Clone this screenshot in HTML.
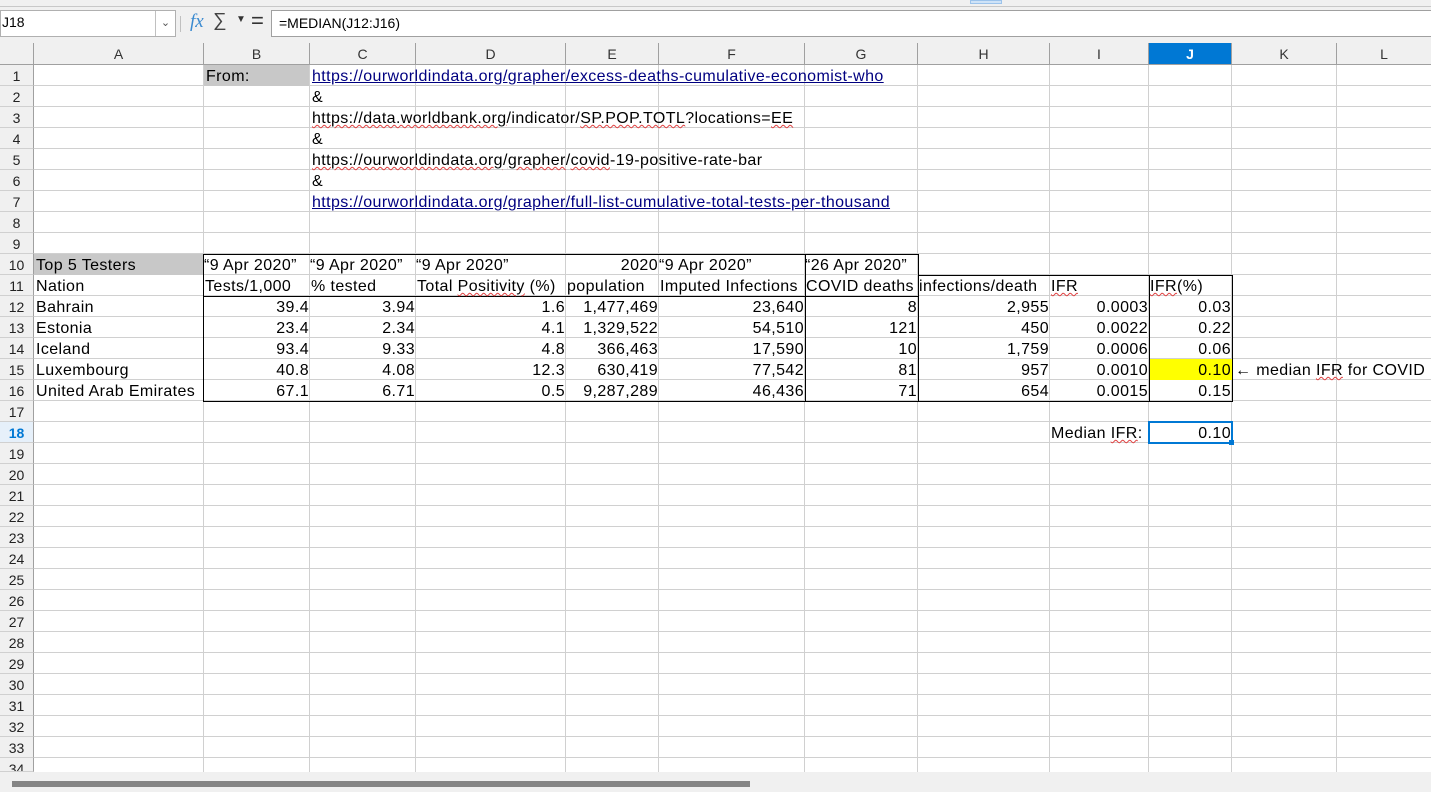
<!DOCTYPE html>
<html><head><meta charset="utf-8"><style>
*{margin:0;padding:0;box-sizing:border-box}
body{width:1431px;height:792px;overflow:hidden;background:#fff;position:relative;font-family:"Liberation Sans",sans-serif;font-size:15px;color:#000}
.a{position:absolute}
.c{position:absolute;height:21px;line-height:23px;white-space:nowrap;padding:0 2px;overflow:visible;font-size:16px;letter-spacing:0.4px}
.r{text-align:right;letter-spacing:0.4px;padding-right:1px}
.v{position:absolute;top:65px;height:707px;width:1px;background:#d0d0d0}
.hd{position:absolute;top:43px;height:22px;line-height:22px;text-align:center;font-size:14px;color:#333;background:#f0f0f0;border-right:1px solid #a0a0a0;border-bottom:1px solid #a0a0a0}
.rn{position:absolute;left:0;width:34px;height:21px;line-height:22px;text-align:center;font-size:14px;color:#222;background:#f0f0f0;border-right:1px solid #a0a0a0;border-bottom:1px solid #d0d0d0}
.lk{color:#000080;text-decoration:underline}
.sq{text-decoration:underline wavy #e04040;text-decoration-thickness:1px}
.bx{position:absolute;border:1px solid #000}
</style></head><body>
<div class="a" style="left:0;top:0;width:1431px;height:43px;background:#f0f0f0"></div>
<div class="a" style="left:0;top:6px;width:1431px;height:1px;background:#c8c8c8"></div>
<div class="a" style="left:970px;top:0;width:32px;height:4px;background:#cfe3f7;border:1px solid #9cc3eb"></div>
<div class="a" style="left:0;top:10px;width:176px;height:27px;background:#fff;border:1px solid #b0b0b0"></div>
<div class="a" style="left:2px;top:14px;font-size:14px">J18</div>
<div class="a" style="left:155px;top:11px;width:20px;height:25px;border-left:1px solid #c0c0c0;background:#fff;font-size:11px;text-align:center;line-height:24px;color:#555">&#8964;</div>
<div class="a" style="left:180px;top:16px;width:1px;height:16px;background:#c0c0c0"></div>
<div class="a" style="left:190px;top:11px;font-family:'Liberation Serif',serif;font-style:italic;font-size:19px;color:#3a8ad0">fx</div>
<div class="a" style="left:213px;top:10px;font-size:19px;color:#444">&#8721;</div>
<div class="a" style="left:236px;top:14px;font-size:10px;color:#333">&#9660;</div>
<div class="a" style="left:251px;top:8px;font-size:22px;color:#333">=</div>
<div class="a" style="left:271px;top:10px;width:1160px;height:27px;background:#fff;border:1px solid #a0a0a0;border-right:none;font-size:14px;line-height:25px;padding-left:7px">=MEDIAN(J12:J16)</div>

<div class="hd" style="left:0;width:34px"></div>
<div class="hd" style="left:34px;width:170px">A</div>
<div class="hd" style="left:204px;width:106px">B</div>
<div class="hd" style="left:310px;width:106px">C</div>
<div class="hd" style="left:416px;width:150px">D</div>
<div class="hd" style="left:566px;width:93px">E</div>
<div class="hd" style="left:659px;width:146px">F</div>
<div class="hd" style="left:805px;width:113px">G</div>
<div class="hd" style="left:918px;width:132px">H</div>
<div class="hd" style="left:1050px;width:99px">I</div>
<div class="hd" style="left:1149px;width:83px;background:#0078d4;color:#fff;font-weight:bold">J</div>
<div class="hd" style="left:1232px;width:105px">K</div>
<div class="hd" style="left:1337px;width:94px;border-right:none">L</div>

<div class="a" style="left:34px;top:65px;width:1397px;height:707px;background:repeating-linear-gradient(to bottom,transparent 0,transparent 20px,#d0d0d0 20px,#d0d0d0 21px)"></div>
<div class="v" style="left:203px"></div><div class="v" style="left:309px"></div>
<div class="v" style="left:415px"></div><div class="v" style="left:565px"></div>
<div class="v" style="left:658px"></div><div class="v" style="left:804px"></div>
<div class="v" style="left:917px"></div><div class="v" style="left:1049px"></div>
<div class="v" style="left:1148px"></div><div class="v" style="left:1231px"></div>
<div class="v" style="left:1336px"></div>

<div class="rn" style="top:65px">1</div><div class="rn" style="top:86px">2</div><div class="rn" style="top:107px">3</div><div class="rn" style="top:128px">4</div><div class="rn" style="top:149px">5</div><div class="rn" style="top:170px">6</div><div class="rn" style="top:191px">7</div><div class="rn" style="top:212px">8</div><div class="rn" style="top:233px">9</div><div class="rn" style="top:254px">10</div><div class="rn" style="top:275px">11</div><div class="rn" style="top:296px">12</div><div class="rn" style="top:317px">13</div><div class="rn" style="top:338px">14</div><div class="rn" style="top:359px">15</div><div class="rn" style="top:380px">16</div><div class="rn" style="top:401px">17</div><div class="rn" style="top:422px;color:#0078d4;font-weight:bold;background:#e6f0fa">18</div><div class="rn" style="top:443px">19</div><div class="rn" style="top:464px">20</div><div class="rn" style="top:485px">21</div><div class="rn" style="top:506px">22</div><div class="rn" style="top:527px">23</div><div class="rn" style="top:548px">24</div><div class="rn" style="top:569px">25</div><div class="rn" style="top:590px">26</div><div class="rn" style="top:611px">27</div><div class="rn" style="top:632px">28</div><div class="rn" style="top:653px">29</div><div class="rn" style="top:674px">30</div><div class="rn" style="top:695px">31</div><div class="rn" style="top:716px">32</div><div class="rn" style="top:737px">33</div><div class="rn" style="top:758px;height:14px;overflow:hidden">34</div>

<div class="a" style="left:204px;top:65px;width:105px;height:21px;background:#c8c8c8"></div>
<div class="a" style="left:34px;top:254px;width:169px;height:21px;background:#c8c8c8"></div>
<div class="a" style="left:1149px;top:359px;width:83px;height:21px;background:#ffff00"></div>

<div class="bx" style="left:203px;top:254px;width:603px;height:148px"></div>
<div class="bx" style="left:805px;top:254px;width:114px;height:148px"></div>
<div class="a" style="left:203px;top:296px;width:715px;height:1px;background:#000"></div>
<div class="bx" style="left:918px;top:275px;width:232px;height:127px"></div>
<div class="bx" style="left:1149px;top:275px;width:84px;height:127px"></div>

<div class="c" style="left:204px;top:65px">From:</div>
<div class="c lk" style="left:310px;top:65px">https://ourworldindata.org/grapher/excess-deaths-cumulative-economist-who</div>
<div class="c" style="left:310px;top:86px">&amp;</div>
<div class="c" style="left:310px;top:107px"><span class="sq">https://data.worldbank.org</span>/indicator/<span class="sq">SP.POP.TOTL</span>?locations=<span class="sq">EE</span></div>
<div class="c" style="left:310px;top:128px">&amp;</div>
<div class="c" style="left:310px;top:149px"><span class="sq">https://ourworldindata.org</span>/<span class="sq">grapher</span>/<span class="sq">covid</span>-19-positive-rate-bar</div>
<div class="c" style="left:310px;top:170px">&amp;</div>
<div class="c lk" style="left:310px;top:191px">https://ourworldindata.org/grapher/full-list-cumulative-total-tests-per-thousand</div>

<div class="c" style="left:34px;top:254px">Top 5 Testers</div>
<div class="c" style="left:202px;top:254px">“9 Apr 2020”</div>
<div class="c" style="left:308px;top:254px">“9 Apr 2020”</div>
<div class="c" style="left:414px;top:254px">“9 Apr 2020”</div>
<div class="c r" style="left:566px;top:254px;width:93px">2020</div>
<div class="c" style="left:657px;top:254px">“9 Apr 2020”</div>
<div class="c" style="left:803px;top:254px">“26 Apr 2020”</div>

<div class="c" style="left:34px;top:275px">Nation</div>
<div class="c" style="left:203px;top:275px">Tests/1,000</div>
<div class="c" style="left:309px;top:275px">% tested</div>
<div class="c" style="left:415px;top:275px">Total <span class="sq">Positivity</span> (%)</div>
<div class="c" style="left:565px;top:275px">population</div>
<div class="c" style="left:658px;top:275px">Imputed Infections</div>
<div class="c" style="left:804px;top:275px">COVID deaths</div>
<div class="c" style="left:917px;top:275px">infections/death</div>
<div class="c" style="left:1049px;top:275px"><span class="sq">IFR</span></div>
<div class="c" style="left:1148px;top:275px"><span class="sq">IFR</span>(%)</div>

<div class="c" style="left:34px;top:296px">Bahrain</div>
<div class="c" style="left:34px;top:317px">Estonia</div>
<div class="c" style="left:34px;top:338px">Iceland</div>
<div class="c" style="left:34px;top:359px">Luxembourg</div>
<div class="c" style="left:34px;top:380px">United Arab Emirates</div>

<div class="c r" style="left:204px;top:296px;width:106px">39.4</div><div class="c r" style="left:204px;top:317px;width:106px">23.4</div><div class="c r" style="left:204px;top:338px;width:106px">93.4</div><div class="c r" style="left:204px;top:359px;width:106px">40.8</div><div class="c r" style="left:204px;top:380px;width:106px">67.1</div>
<div class="c r" style="left:310px;top:296px;width:106px">3.94</div><div class="c r" style="left:310px;top:317px;width:106px">2.34</div><div class="c r" style="left:310px;top:338px;width:106px">9.33</div><div class="c r" style="left:310px;top:359px;width:106px">4.08</div><div class="c r" style="left:310px;top:380px;width:106px">6.71</div>
<div class="c r" style="left:416px;top:296px;width:150px">1.6</div><div class="c r" style="left:416px;top:317px;width:150px">4.1</div><div class="c r" style="left:416px;top:338px;width:150px">4.8</div><div class="c r" style="left:416px;top:359px;width:150px">12.3</div><div class="c r" style="left:416px;top:380px;width:150px">0.5</div>
<div class="c r" style="left:566px;top:296px;width:93px">1,477,469</div><div class="c r" style="left:566px;top:317px;width:93px">1,329,522</div><div class="c r" style="left:566px;top:338px;width:93px">366,463</div><div class="c r" style="left:566px;top:359px;width:93px">630,419</div><div class="c r" style="left:566px;top:380px;width:93px">9,287,289</div>
<div class="c r" style="left:659px;top:296px;width:146px">23,640</div><div class="c r" style="left:659px;top:317px;width:146px">54,510</div><div class="c r" style="left:659px;top:338px;width:146px">17,590</div><div class="c r" style="left:659px;top:359px;width:146px">77,542</div><div class="c r" style="left:659px;top:380px;width:146px">46,436</div>
<div class="c r" style="left:805px;top:296px;width:113px">8</div><div class="c r" style="left:805px;top:317px;width:113px">121</div><div class="c r" style="left:805px;top:338px;width:113px">10</div><div class="c r" style="left:805px;top:359px;width:113px">81</div><div class="c r" style="left:805px;top:380px;width:113px">71</div>
<div class="c r" style="left:918px;top:296px;width:132px">2,955</div><div class="c r" style="left:918px;top:317px;width:132px">450</div><div class="c r" style="left:918px;top:338px;width:132px">1,759</div><div class="c r" style="left:918px;top:359px;width:132px">957</div><div class="c r" style="left:918px;top:380px;width:132px">654</div>
<div class="c r" style="left:1050px;top:296px;width:99px">0.0003</div><div class="c r" style="left:1050px;top:317px;width:99px">0.0022</div><div class="c r" style="left:1050px;top:338px;width:99px">0.0006</div><div class="c r" style="left:1050px;top:359px;width:99px">0.0010</div><div class="c r" style="left:1050px;top:380px;width:99px">0.0015</div>
<div class="c r" style="left:1149px;top:296px;width:83px">0.03</div><div class="c r" style="left:1149px;top:317px;width:83px">0.22</div><div class="c r" style="left:1149px;top:338px;width:83px">0.06</div><div class="c r" style="left:1149px;top:359px;width:83px">0.10</div><div class="c r" style="left:1149px;top:380px;width:83px">0.15</div>
<div class="c" style="left:1233px;top:359px">← median <span class="sq">IFR</span> for COVID</div>

<div class="c" style="left:1049px;top:422px">Median <span class="sq">IFR</span>:</div>
<div class="a" style="left:1148px;top:421px;width:85px;height:23px;border:2px solid #0078d4"></div>
<div class="a" style="left:1229px;top:440px;width:5px;height:5px;background:#0078d4"></div>
<div class="c r" style="left:1149px;top:422px;width:83px">0.10</div>

<div class="a" style="left:0;top:772px;width:1431px;height:20px;background:#f0f0f0"></div>
<div class="a" style="left:12px;top:781px;width:738px;height:6px;background:#858585"></div>
</body></html>
